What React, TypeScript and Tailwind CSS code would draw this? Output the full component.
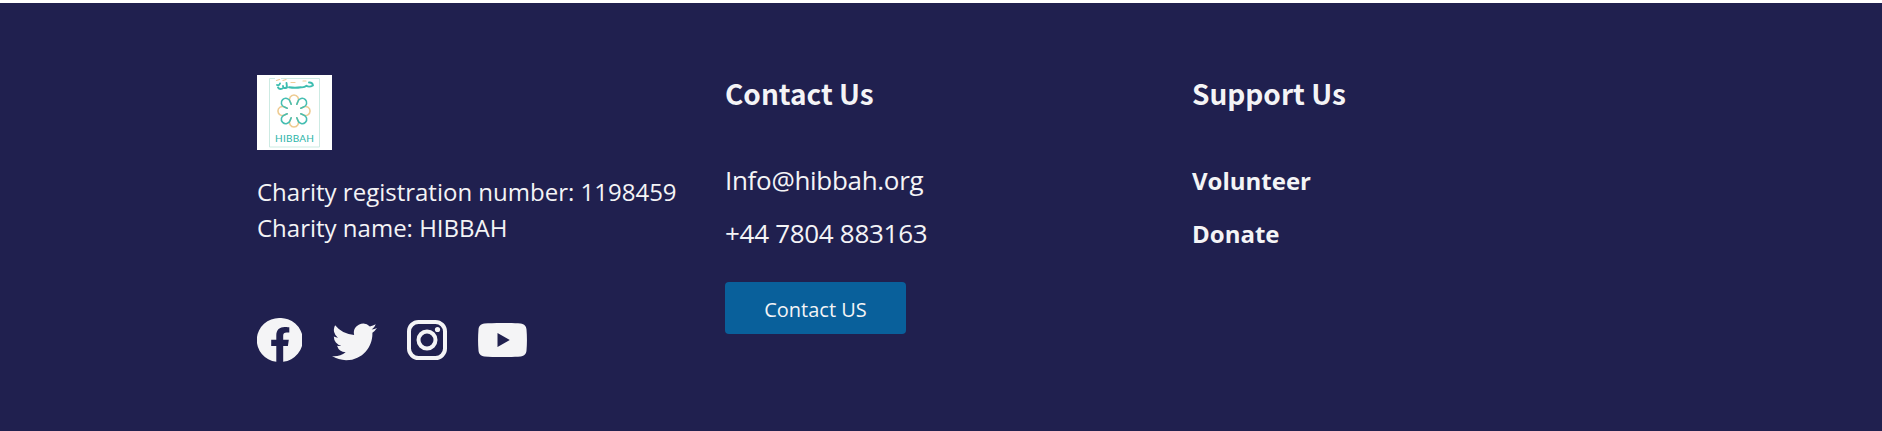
import React from "react";
import { BsTwitter } from "react-icons/bs";

const petals = [0, 90, 180, 270, 45, 135, 225, 315];

function Logo() {
  return (
    <svg viewBox="0 0 75 75" className="block size-[75px] bg-white" role="img" aria-label="Hibbah">
      <path d="M18 3.500H12.500V72H62.500V3.500H24" fill="none" stroke="#cdebe3" strokeWidth="1" />
      <g fill="none" stroke="#3dbdb0" strokeWidth="1.900" strokeLinecap="round" strokeLinejoin="round">
        <path d="M52 7.500q3.500-.5 4 3q-4 2-6.500.3q-2 1.800-5.500 1.500q-6 1-12 0" />
        <path d="M29.500 8l.5 4.500q-4 1.500-4-1.500M25.500 13.500q-3 1.500-4.500-1M23 8.500q-1 2.500-3 1.500" />
      </g>
      <g stroke="#f0cd98" strokeWidth="1.200" strokeLinecap="round" fill="none">
        <path d="M19.500 5.500l3-1M26 5.500l3-1M34 7.500h4M46 6h3" />
      </g>
      <g fill="none" strokeWidth="1.600" strokeLinecap="round">
        {petals.map((angle) => (
          <path
            key={angle}
            transform={`rotate(${angle} 37 36)`}
            d="M34.200 29.200L33 26.500a4.500 4.500 0 1 1 8 0L39.800 29.200"
            stroke={angle % 90 === 0 ? "#eecb92" : "#45beb2"}
          />
        ))}
      </g>
      <text x="18" y="67" textLength="39" fontSize="10" fontWeight="400" className="fill-[#2db5a9] font-['Lato',sans-serif]">
        HIBBAH
      </text>
    </svg>
  );
}

function Facebook() {
  return (
    <svg viewBox="0 0 45 45" preserveAspectRatio="none" className="h-[44px] w-[45px]" fill="currentColor">
      <path d="M22.500 0a22.500 22.500 0 0 0-3.200 44.800V28.700h-5.100v-6.500h5.100v-4.400c0-5.800 3.400-8.600 8.400-8.600 2.600 0 4.600.3 4.600.3v5.300h-2.600c-2.500 0-3.500 1.300-3.500 3.100v4.300h5.600l-.9 6.500h-4.700v16.100A22.500 22.500 0 0 0 22.500 0Z" />
    </svg>
  );
}

function Instagram() {
  return (
    <svg viewBox="0 0 40 40" className="size-10" fill="none" stroke="currentColor">
      <rect x="2" y="2" width="36" height="36" rx="9.500" strokeWidth="4" />
      <circle cx="20" cy="20" r="8.500" strokeWidth="4" />
      <circle cx="30.500" cy="9.500" r="2.600" fill="currentColor" stroke="none" />
    </svg>
  );
}

function Youtube() {
  return (
    <svg viewBox="0 0 49 34" className="h-[34px] w-[49px]" fill="currentColor">
      <path fillRule="evenodd" d="M24.500 0c8 0 14 .2 18 .6 4 .4 5.700 2.700 6 6 .6 7 .6 14 0 20.800-.3 3.300-2 5.600-6 6-8 .8-28 .8-36 0-4-.4-5.700-2.700-6-6-.6-6.800-.6-13.800 0-20.800.3-3.300 2-5.600 6-6 4-.4 10-.6 18-.6ZM19.500 10v14l12.300-7Z" />
    </svg>
  );
}

const heading = "font-['Noto_Sans_CJK_SC',sans-serif] text-[28px] font-bold leading-[36px]";
const contactLine = "text-[26px] leading-[36px] tracking-[-0.300px]";
const supportLink = "text-[24px] font-bold leading-[36px]";

export default function App() {
  return (
    <div className="h-[431px] bg-[#20204f] font-['Open_Sans',sans-serif] text-[#f4f4f6]">
      <div className="h-[3px] bg-white" />
      <footer className="grid grid-cols-[468px_467px_467px] pl-[257px] pt-[72px]">
        <section>
          <Logo />
          <p className="mt-6 whitespace-nowrap text-[24px] leading-9">
            Charity registration number: 1198459
            <br />
            Charity name: HIBBAH
          </p>
          <div className="mt-[72px] flex h-[44px] items-center">
            <Facebook />
            <BsTwitter className="ml-[29.500px] size-[45px]" />
            <div className="ml-[30.500px]"><Instagram /></div>
            <div className="ml-[30.500px]"><Youtube /></div>
          </div>
        </section>
        <section>
          <h2 className={heading}>Contact Us</h2>
          <p className={`mt-[51px] ${contactLine}`}>Info@hibbah.org</p>
          <p className={`mt-[17px] ${contactLine}`}>+44 7804 883163</p>
          <button className="mt-[31px] block h-[52px] w-[181px] rounded-[4px] bg-[#09609b] pt-[3px] text-[20px]">Contact US</button>
        </section>
        <section>
          <h2 className={heading}>Support Us</h2>
          <p className={`mt-[52px] ${supportLink}`}>Volunteer</p>
          <p className={`mt-[17px] ${supportLink}`}>Donate</p>
        </section>
      </footer>
    </div>
  );
}
